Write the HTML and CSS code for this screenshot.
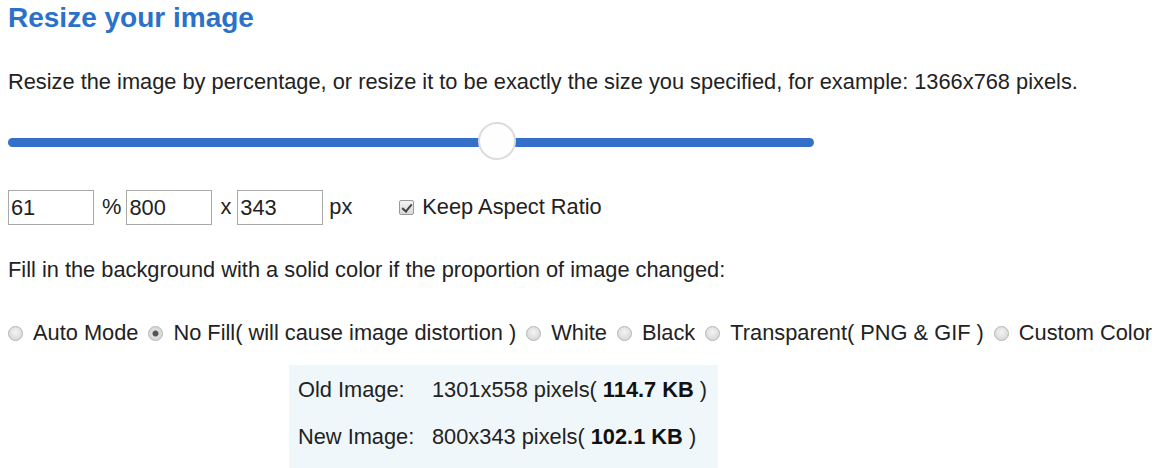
FILE: index.html
```html
<!DOCTYPE html>
<html>
<head>
<meta charset="utf-8">
<link rel="stylesheet" href="styles.css">
</head>
<body>
<div class="page">
  <h2 class="title">Resize your image</h2>
  <p class="desc">Resize the image by percentage, or resize it to be exactly the size you specified, for example: 1366x768 pixels.</p>
  <div class="slider">
    <div class="track"></div>
    <div class="thumb"></div>
  </div>
  <div class="sizes">
    <span class="field">61</span>
    <span class="unit pct">%</span>
    <span class="field">800</span>
    <span class="unit">x</span>
    <span class="field">343</span>
    <span class="unit px">px</span>
    <span class="check"></span>
    <span class="label">Keep Aspect Ratio</span>
  </div>
  <p class="fill">Fill in the background with a solid color if the proportion of image changed:</p>
  <div class="radios">
    <span class="radio"></span><span class="rlabel">Auto Mode</span>
    <span class="radio on"></span><span class="rlabel">No Fill( will cause image distortion )</span>
    <span class="radio"></span><span class="rlabel">White</span>
    <span class="radio"></span><span class="rlabel">Black</span>
    <span class="radio"></span><span class="rlabel">Transparent( PNG &amp; GIF )</span>
    <span class="radio"></span><span class="rlabel">Custom Color</span>
  </div>
  <div class="info">
    <div class="row"><span class="k">Old Image:</span><span class="v">1301x558 pixels( <b>114.7 KB</b> )</span></div>
    <div class="row"><span class="k">New Image:</span><span class="v">800x343 pixels( <b>102.1 KB</b> )</span></div>
  </div>
</div>
</body>
</html>
```
FILE: styles.css
```css
html, body {
  margin: 0;
  padding: 0;
  background: #ffffff;
}
body {
  font-family: "Liberation Sans", Arial, sans-serif;
  color: #222222;
  font-size: 21.8px;
}
.page {
  padding: 0 0 0 8px;
}
.title {
  margin: 0;
  padding-top: 3px;
  font-size: 28px;
  line-height: 30px;
  font-weight: bold;
  color: #2b70c9;
}
.desc {
  margin: 37px 0 0 0;
  line-height: 24px;
}
.slider {
  position: relative;
  width: 806px;
  height: 40px;
  margin-top: 28px;
}
.track {
  position: absolute;
  left: 0;
  right: 0;
  top: 16px;
  height: 9px;
  border-radius: 5px;
  background: #3470c9;
}
.thumb {
  position: absolute;
  left: 470px;
  top: 0;
  width: 34px;
  height: 34px;
  border-radius: 50%;
  background: #fefefe;
  border: 2px solid #dcdcdc;
}
.sizes {
  display: flex;
  align-items: center;
  margin-top: 27px;
  height: 36px;
}
.field {
  box-sizing: border-box;
  width: 86px;
  height: 35px;
  border: 1px solid #a9a9a9;
  padding: 0 0 0 2px;
  line-height: 33px;
  color: #222;
}
.unit {
  margin: 0 6px 0 8px;
}
.unit.pct {
  margin: 0 5px 0 8px;
}
.unit.px {
  margin: 0 0 0 6px;
}
.check {
  box-sizing: border-box;
  width: 15px;
  height: 15px;
  margin-left: 47px;
  border: 1px solid #9a9a9a;
  border-radius: 2px;
  background: linear-gradient(#f4f4f4, #d8d8d8);
  position: relative;
}
.check::after {
  content: "";
  position: absolute;
  left: 4px;
  top: 1px;
  width: 4px;
  height: 8px;
  border: solid #444;
  border-width: 0 2px 2px 0;
  transform: rotate(40deg);
}
.label {
  margin-left: 8px;
}
.fill {
  margin: 33px 0 0 0;
  line-height: 24px;
}
.radios {
  display: flex;
  align-items: center;
  margin-top: 39px;
  height: 24px;
  white-space: nowrap;
}
.radio {
  box-sizing: border-box;
  width: 15px;
  height: 15px;
  border-radius: 50%;
  border: 1px solid #b5b5b5;
  background: radial-gradient(circle at 50% 40%, #f4f4f4, #d0d0d0);
  margin-right: 10px;
  flex: none;
}
.radio.on {
  background: radial-gradient(circle, #555 0 2.5px, #e0e0e0 3.5px, #d0d0d0);
}
.rlabel {
  margin-right: 10px;
}
.info {
  margin: 20px 0 0 281px;
  width: 429px;
  background: #f0f7fb;
  padding: 13px 0 30px 9px;
  box-sizing: border-box;
}
.row {
  display: flex;
  line-height: 24px;
  height: 24px;
}
.row + .row {
  margin-top: 23px;
}
.k {
  width: 134px;
}
.v b {
  color: #111;
}
```
